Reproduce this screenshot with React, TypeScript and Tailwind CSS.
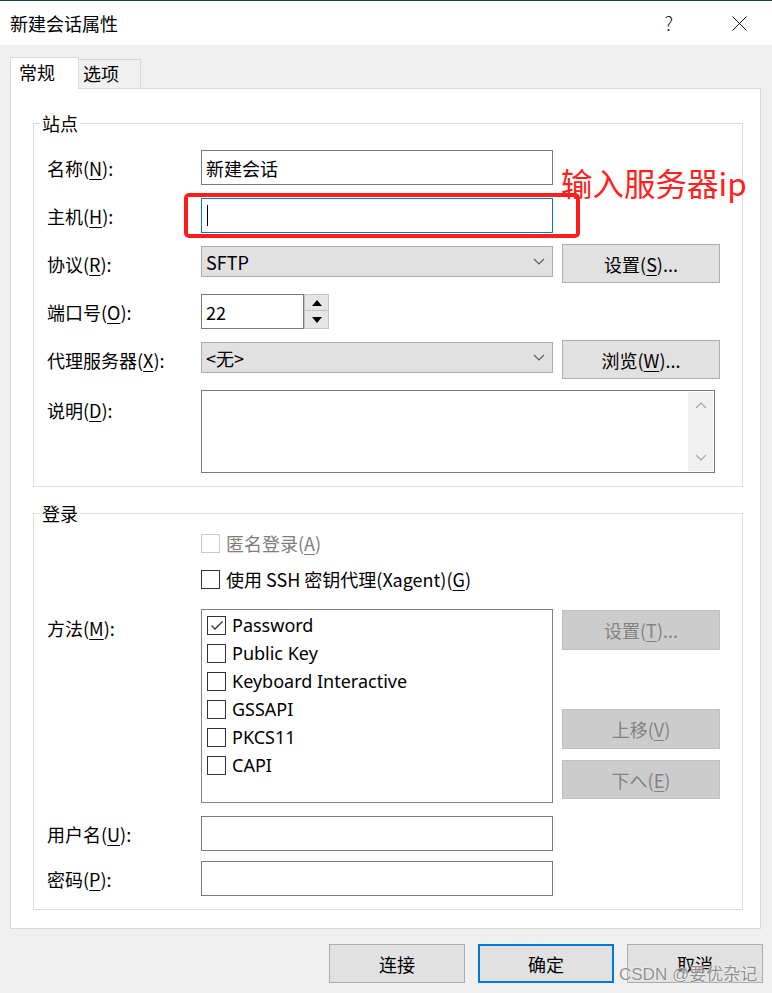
import React from "react";

const Label = ({ children, className = "" }: { children: React.ReactNode; className?: string }) => (
  <div className={`w-[154px] shrink-0 text-[18px] leading-[24px] text-black ${className}`}>{children}</div>
);

const U = ({ children }: { children: React.ReactNode }) => (
  <span className="underline underline-offset-[3px] decoration-1">{children}</span>
);

const Input = ({ children, className = "" }: { children?: React.ReactNode; className?: string }) => (
  <div className={`h-[35px] border border-[#7a7a7a] bg-white px-[4px] flex items-center text-[18px] leading-[24px] ${className}`}>
    {children}
  </div>
);

const Chevron = ({ up = false, color = "#5a5a5a" }: { up?: boolean; color?: string }) => (
  <svg width="12" height="7" viewBox="0 0 12 7">
    <path d={up ? "M1 6 L6 1 L11 6" : "M1 1 L6 6 L11 1"} fill="none" stroke={color} strokeWidth="1.1" />
  </svg>
);

const Select = ({ children }: { children: React.ReactNode }) => (
  <div className="w-[352px] h-[31px] border border-[#adadad] bg-[#e1e1e1] flex items-center justify-between pl-[4px] pr-[7px] text-[18px] leading-[24px]">
    <span>{children}</span>
    <Chevron />
  </div>
);

const Btn = ({
  children,
  disabled = false,
  primary = false,
  className = "",
}: {
  children: React.ReactNode;
  disabled?: boolean;
  primary?: boolean;
  className?: string;
}) => (
  <div
    className={`flex items-center justify-center text-[18px] leading-[24px] ${
      disabled
        ? "bg-[#cccccc] border border-[#bfbfbf] text-[#838383]"
        : primary
        ? "bg-[#e1e1e1] border-2 border-[#0078d7] text-black"
        : "bg-[#e1e1e1] border border-[#adadad] text-black"
    } ${className}`}
  >
    {children}
  </div>
);

const Box = ({ checked = false, disabled = false }: { checked?: boolean; disabled?: boolean }) => (
  <div
    className={`w-[19px] h-[19px] shrink-0 border bg-white flex items-center justify-center ${
      disabled ? "border-[#cccccc]" : "border-[#333333]"
    }`}
  >
    {checked && (
      <svg width="14" height="11" viewBox="0 0 14 11">
        <path d="M1.5 5.5 L5 9 L12.5 1.5" fill="none" stroke="#333333" strokeWidth="1.3" />
      </svg>
    )}
  </div>
);

const Tri = ({ up }: { up: boolean }) => (
  <svg width="10" height="6" viewBox="0 0 10 6">
    <path d={up ? "M0 6 L5 0 L10 6 Z" : "M0 0 L5 6 L10 0 Z"} fill="#000" />
  </svg>
);

const methods = ["Password", "Public Key", "Keyboard Interactive", "GSSAPI", "PKCS11", "CAPI"];

export default function App() {
  return (
    <div className="relative w-[772px] h-[993px] overflow-hidden bg-[#f0f0f0] text-black font-['Noto_Sans_CJK_SC','Noto_Sans',sans-serif]">
      {/* top border */}
      <div className="h-[1px] bg-[#1c3d5e]" />
      {/* title bar */}
      <div className="h-[44px] bg-white flex items-center pl-[10px]">
        <span className="text-[18px] leading-[24px]">新建会话属性</span>
        <span className="ml-auto text-[19px] leading-[24px] font-light text-[#222]">?</span>
        <svg className="ml-[59px] mr-[25px]" width="15" height="15" viewBox="0 0 15 15">
          <path d="M0.5 0.5 L14.5 14.5 M14.5 0.5 L0.5 14.5" stroke="#111" strokeWidth="1" />
        </svg>
      </div>

      {/* tabs */}
      <div className="pt-[12px]">
        <div className="relative z-10 ml-[10px] h-[32px] -mb-[1px] flex items-end">
          <div className="h-[32px] w-[69px] bg-white border-l border-t border-r border-[#d9d9d9] pl-[8px] pt-[2px] text-[18px] leading-[24px]">
            常规
          </div>
          <div className="h-[29px] mb-[1px] w-[62px] bg-[#f0f0f0] border-t border-r border-[#d9d9d9] pl-[4px] text-[18px] leading-[26px]">
            选项
          </div>
        </div>

        {/* panel */}
        <div className="ml-[10px] w-[751px] border border-[#d9d9d9] bg-white pt-[34px] pb-[18px]">
          {/* 站点 */}
          <div className="relative ml-[22px] w-[710px] border border-[#dcdcdc] pl-[13px] pt-[26px] pb-[13px]">
            <span className="absolute left-[6px] top-[-13px] bg-white px-[2px] text-[18px] leading-[24px]">站点</span>

            <div className="flex items-center h-[35px]">
              <Label>
                名称(<U>N</U>):
              </Label>
              <Input className="w-[352px]">新建会话</Input>
            </div>

            <div className="flex items-center h-[35px] mt-[13px]">
              <Label>
                主机(<U>H</U>):
              </Label>
              <div className="relative">
                <Input className="w-[352px] border-[#0078d7]">
                  <div className="w-[1px] h-[21px] bg-black ml-[1px]" />
                </Input>
                <div className="absolute left-[-17px] top-[-5px] w-[396px] h-[45px] border-4 border-[#ff1e1e] rounded-[5px]" />
                <span className="absolute left-[360px] top-[-35px] whitespace-nowrap text-[31.5px] leading-[38px] text-[#ff2020]">
                  输入服务器ip
                </span>
              </div>
            </div>

            <div className="flex items-center h-[39px] mt-[11px]">
              <Label>
                协议(<U>R</U>):
              </Label>
              <div className="self-start mt-[2px]">
                <Select>SFTP</Select>
              </div>
              <Btn className="ml-[9px] w-[158px] h-[39px]">
                设置(<U>S</U>)...
              </Btn>
            </div>

            <div className="flex items-center h-[35px] mt-[11px]">
              <Label>
                端口号(<U>O</U>):
              </Label>
              <Input className="w-[103px]">22</Input>
              <div className="w-[25px] h-[35px] flex flex-col border border-[#c4c4c4] bg-[#f5f5f5]">
                <div className="h-[16px] flex items-center justify-center bg-[#e6e6e6] border-b border-[#c4c4c4]">
                  <Tri up />
                </div>
                <div className="flex-1 flex items-center justify-center bg-[#e6e6e6]">
                  <Tri up={false} />
                </div>
              </div>
            </div>

            <div className="flex items-center h-[39px] mt-[11px]">
              <Label>
                代理服务器(<U>X</U>):
              </Label>
              <div className="self-start mt-[2px]">
                <Select>&lt;无&gt;</Select>
              </div>
              <Btn className="ml-[9px] w-[158px] h-[39px]">
                浏览(<U>W</U>)...
              </Btn>
            </div>

            <div className="flex items-start h-[83px] mt-[11px]">
              <Label className="pt-[8px]">
                说明(<U>D</U>):
              </Label>
              <div className="w-[514px] h-[83px] border border-[#7a7a7a] bg-white flex justify-end p-[1px]">
                <div className="w-[25px] h-full bg-[#f0f0f0] flex flex-col items-center justify-between py-[10px]">
                  <Chevron up color="#a6a6a6" />
                  <Chevron color="#a6a6a6" />
                </div>
              </div>
            </div>
          </div>

          {/* 登录 */}
          <div className="relative mt-[26px] ml-[22px] w-[710px] border border-[#dcdcdc] pl-[13px] pt-[19px] pb-[13px]">
            <span className="absolute left-[6px] top-[-13px] bg-white px-[2px] text-[18px] leading-[24px]">登录</span>

            <div className="flex items-center h-[20px] pl-[154px]">
              <Box disabled />
              <span className="ml-[6px] text-[18px] leading-[24px] text-[#7d7d7d]">
                匿名登录(<U>A</U>)
              </span>
            </div>

            <div className="flex items-center h-[20px] mt-[16px] pl-[154px]">
              <Box />
              <span className="ml-[6px] text-[18px] leading-[24px]">
                使用 SSH 密钥代理(Xagent)(<U>G</U>)
              </span>
            </div>

            <div className="flex items-start mt-[20px]">
              <Label className="pt-[7px]">
                方法(<U>M</U>):
              </Label>
              <div className="w-[352px] h-[194px] border border-[#828282] bg-white pl-[5px] pt-[1px]">
                {methods.map((m, i) => (
                  <div key={m} className="flex items-center h-[28px]">
                    <Box checked={i === 0} />
                    <span className="ml-[6px] text-[18px] leading-[24px] font-['Noto_Sans','Noto_Sans_CJK_SC',sans-serif]">
                      {m}
                    </span>
                  </div>
                ))}
              </div>
              <div className="ml-[9px] mt-[1px] flex flex-col">
                <Btn disabled className="w-[158px] h-[40px]">
                  设置(<U>T</U>)...
                </Btn>
                <Btn disabled className="w-[158px] h-[40px] mt-[59px]">
                  上移(<U>V</U>)
                </Btn>
                <Btn disabled className="w-[158px] h-[39px] mt-[11px]">
                  下へ(<U>E</U>)
                </Btn>
              </div>
            </div>

            <div className="flex items-center h-[35px] mt-[13px]">
              <Label>
                用户名(<U>U</U>):
              </Label>
              <Input className="w-[352px]" />
            </div>

            <div className="flex items-center h-[35px] mt-[10px]">
              <Label>
                密码(<U>P</U>):
              </Label>
              <Input className="w-[352px]" />
            </div>
          </div>
        </div>

        {/* bottom buttons */}
        <div className="mt-[15px] flex justify-end gap-[13px] pr-[9px]">
          <Btn className="w-[136px] h-[39px]">连接</Btn>
          <Btn primary className="w-[136px] h-[39px]">
            确定
          </Btn>
          <Btn className="w-[136px] h-[39px]">取消</Btn>
        </div>
      </div>

      {/* watermark */}
      <span className="absolute left-[619px] top-[963px] whitespace-nowrap text-[17px] leading-[24px] text-[#8e8e8e] font-['Liberation_Sans','Noto_Sans_CJK_SC',sans-serif] [text-shadow:0_0_2px_#ffffff,0_0_1px_#ffffff]">
        CSDN @要优杂记
      </span>
    </div>
  );
}
